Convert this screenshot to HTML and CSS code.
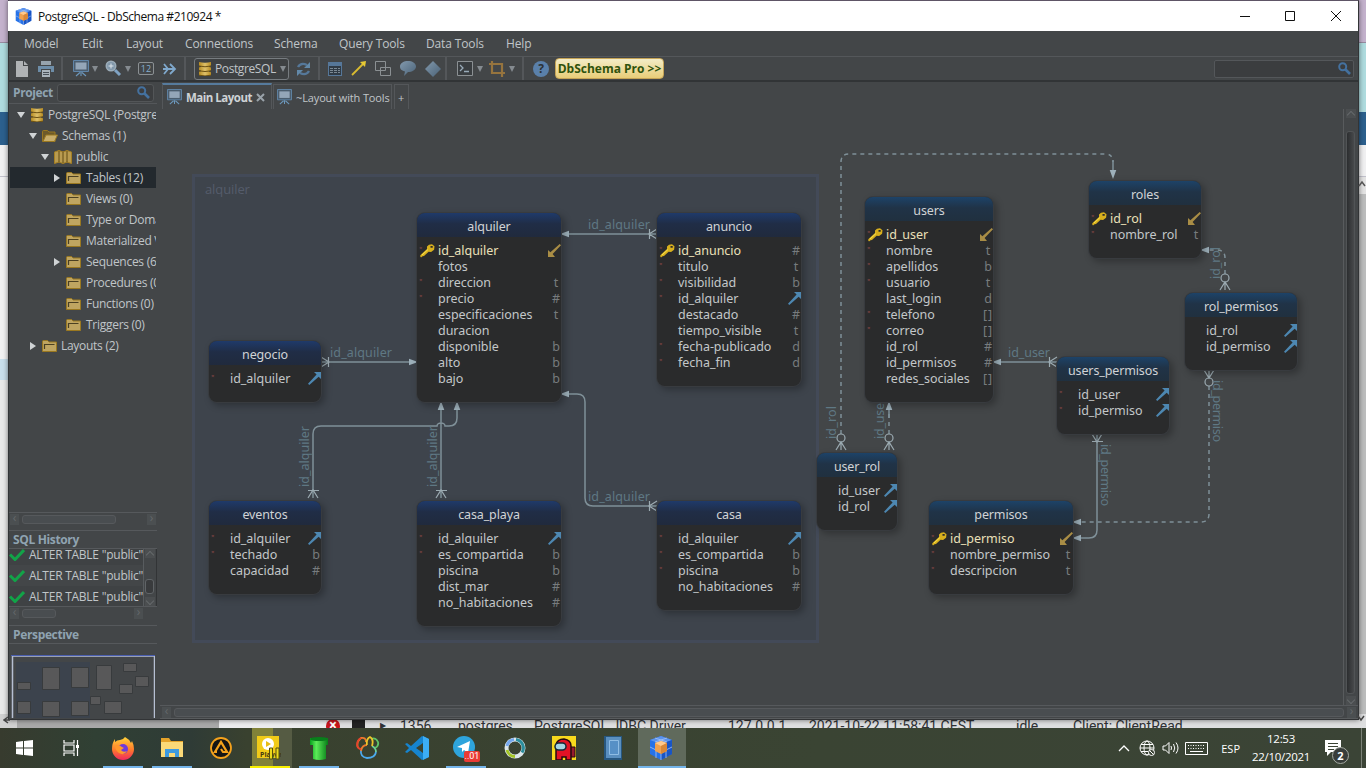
FILE: index.html
```html
<!DOCTYPE html>
<html lang="es">
<head>
<meta charset="utf-8">
<title>PostgreSQL - DbSchema</title>
<link rel="stylesheet" href="styles.css">
</head>
<body>
<svg class="defs" width="0" height="0">
  <defs>
    <linearGradient id="gold" x2="1"><stop offset="0" stop-color="#b78c22"/><stop offset=".5" stop-color="#dec06a"/><stop offset="1" stop-color="#b78c22"/></linearGradient>
    <linearGradient id="steel" x2="1" y2="1"><stop offset="0" stop-color="#8299ad"/><stop offset="1" stop-color="#4a6277"/></linearGradient>
    <linearGradient id="fire" x2="0" y2="1"><stop offset="0" stop-color="#ffd43a"/><stop offset=".55" stop-color="#ff7b2c"/><stop offset="1" stop-color="#f0285f"/></linearGradient>
    <linearGradient id="pipe" x2="1"><stop offset="0" stop-color="#05a01c"/><stop offset=".35" stop-color="#5cec58"/><stop offset="1" stop-color="#077d18"/></linearGradient>
    <symbol id="cube" viewBox="0 0 24 24"><path fill="#2672e8" d="M12 0l11 4v14l-11 6L1 18V4z"/><path fill="#5b93ee" d="M12 0l11 4-11 4L1 4z"/><path fill="#1955c5" d="M12 8l11-4v14l-11 6z"/><path stroke="#a9c4f0" stroke-width=".8" fill="none" d="M6 2l12 4M18 2L6 6M1 11l6 3v8M23 11l-6 3v8M12 18v6"/><path fill="#f0a14e" d="M12 5l6 2v8l-6 3-6-3V7z"/><path fill="#ffc98c" d="M12 5l6 2-6 3-6-3z"/><path fill="#d98737" d="M12 10l6-3v8l-6 3z"/></symbol>
    <symbol id="db" viewBox="0 0 14 14"><path fill="url(#gold)" d="M1 0q6 1.500 12 0v3.500q-1 1-2 .8v.8q2 0 2 .6v2.500q-1 1-2 .8v.8q2 0 2 .6V13q-6 2-12 0V9.800q0-.5 2-.6v-.8Q1 8.500 1 8V5.500q0-.5 2-.6v-.8Q1 4 1 3.500z"/><path stroke="#6d5214" fill="none" d="M1 4q6 1.500 12 0M1 8.800q6 1.500 12 0M1 13.200q6 1.500 12 0"/></symbol>
    <symbol id="folder" viewBox="0 0 15 12"><path fill="#bfa561" stroke="#9a7820" d="M.5 11.500V1.500q0-1 1-1h4l1.500 1.500h7.500v9.500z"/><path fill="none" stroke="#4b4022" stroke-width="1.200" d="M2.500 9V4.500h10"/></symbol>
    <symbol id="folder-open" viewBox="0 0 16 12"><path fill="#6d5a2a" stroke="#9a7820" d="M.5 11.500V1.500q0-1 1-1h4l1.500 1.500h6v9.500z"/><path fill="#c8ae6c" stroke="#9a7820" d="M1 11.500l3-6.500h11.500l-3 6.500z"/></symbol>
    <symbol id="map" viewBox="0 0 18 14"><path fill="#b99b50" stroke="#a57f22" d="M.5 2L5 .5 9 2l4-1.500L17.500 2v11.500L13 12l-4 1.500L5 12 .5 13.500z"/><path stroke="#614a13" d="M5 1v11M9 2v11M13 1v11"/></symbol>
    <symbol id="board" viewBox="0 0 16 17"><path fill="#4b5d6e" stroke="#6085a8" d="M.5.500h15v11H.5z"/><path fill="#94a6b8" d="M2.500 2.500h11v7h-11z"/><path stroke="#6c98bd" stroke-width="1.100" fill="none" d="M8 12v4M7 12.500l-4 3.500M9 12.500l4 3.500"/></symbol>
    <symbol id="lens" viewBox="0 0 13 13"><circle cx="4.700" cy="4.700" r="3.500" fill="none" stroke="#44719f" stroke-width="2"/><path stroke="#44719f" stroke-width="2.600" d="M7.500 7.500L12 12"/></symbol>
    <symbol id="key" viewBox="0 0 15 14"><path fill="#d8b01d" fill-rule="evenodd" d="M9 .8l3-.5 2.500 2-.4 3.500-3 2.200-2.500-.2L4 12l-1.500.3L1 13.500 0 12l1-1.500L7 5V2.500zM10.500 2v1.800h2.200V2z"/><path stroke="#f8e352" d="M2 11l6-5.500"/></symbol>
    <symbol id="fk" viewBox="0 0 13 13"><path fill="#4d87b1" d="M6 0h7v7l-2.300-2.300L1.300 13 0 11.700 8.600 2.600z"/></symbol>
    <symbol id="pk" viewBox="0 0 13 13"><path fill="#a98d45" d="M11.700 0L13 1.300 4.600 10 7 13H0V6l2.400 2.200z"/></symbol>
    <symbol id="check" viewBox="0 0 16 12"><path d="M1 5.500L6 10.500 15 1" fill="none" stroke="#12a348" stroke-width="3"/></symbol>
  </defs>
</svg>

<div class="backdrop"><i class="lilac"></i><i class="aqua"></i><i class="blue"></i><i class="paper"></i><i class="sel"></i><i class="paper2"></i><i class="paper3"></i></div>
<div class="backdrop right"><i class="lilac"></i><i class="aqua"></i><i class="blue"></i><i class="paper"></i><i class="thumb"></i><i class="paper3"></i></div>
<div class="behind"><i class="bscroll"></i><span class="err"><b>×</b></span><span class="blk"></span><span class="tri">▶</span><span class="c1">1356</span><span class="c2">postgres</span><span class="c3">PostgreSQL JDBC Driver</span><span class="c4">127.0.0.1</span><span class="c5">2021-10-22 11:58:41 CEST</span><span class="c6">idle</span><span class="c7">Client: ClientRead</span></div>

<div class="window">
  <header class="title"><svg width="17" height="17"><use href="#cube"/></svg><span>PostgreSQL - DbSchema #210924 *</span>
    <svg class="winctl" width="104" height="12" fill="none" stroke="#111"><path d="M1 6.500h10M46.500 1.500h9v9h-9zM92 1l10 10M102 1L92 11"/></svg>
  </header>
  <nav class="menu"><span>Model</span><span>Edit</span><span>Layout</span><span>Connections</span><span>Schema</span><span>Query Tools</span><span>Data Tools</span><span>Help</span></nav>
  <div class="toolbar">
    <div class="grp g1">
      <svg width="12" height="16"><path fill="#b0b3b5" d="M0 0h7v5h5v11H0zM8 0l4 4H8z"/></svg>
      <svg width="16" height="16"><path fill="#96a3ad" d="M3 0h10v4H3z"/><path fill="#6d8dA8" d="M0 5h16v6h-3V8H3v3H0z"/><path fill="#a9b3bb" d="M4 9h8v7H4z"/><path stroke="#485058" d="M5 11.500h6M5 13.500h6"/></svg>
    </div>
    <div class="grp g2">
      <svg width="16" height="17"><use href="#board"/></svg><i class="dd"></i>
      <svg width="17" height="17" class="mag"><circle cx="6" cy="6" r="4.700" fill="#8197aa" stroke="#9cadb9" stroke-width="1.600"/><path stroke="#dce4ea" d="M3.500 6h5M6 3.500v5"/><path stroke="#7fa3c4" stroke-width="3" d="M10 10l5 5"/></svg><i class="dd"></i>
      <span class="twelve">12</span>
      <svg class="chev" width="14" height="12" fill="none" stroke="#7fa8cc" stroke-width="1.800"><path d="M1 1l4 5-4 5M7 1l5 5-5 5M0 6h12"/></svg>
    </div>
    <div class="grp g3">
      <span class="combo"><svg width="14" height="14"><use href="#db"/></svg><span>PostgreSQL</span><i class="dd"></i></span>
      <svg width="15" height="14" fill="none" stroke="#55789a" stroke-width="2.400"><path d="M2 5Q5 0 11 3M13 9q-3 5-9 2"/><path fill="#6289a9" stroke="none" d="M14 0v6H8zM1 14V8h6z"/></svg>
    </div>
    <div class="grp g4">
      <svg width="14" height="14"><path fill="#567799" d="M0 0h14v14H0z"/><path fill="#303b46" d="M1 4h12v9H1z"/><path stroke="#7b8994" stroke-dasharray="3 1" d="M2 6.500h10M2 8.500h10M2 10.500h10"/></svg>
      <svg width="15" height="15"><path stroke="#d9bb30" stroke-width="1.800" d="M1 14L12 3"/><path fill="#e6c934" d="M9 1l6-1-1 6z"/></svg>
      <svg width="16" height="16"><path fill="none" stroke="#8b9093" d="M.5.500h10v9H.5zM5.500 6.500h10v8h-10z"/></svg>
      <svg width="16" height="15"><path fill="url(#steel)" d="M8 0c4 0 8 2 8 5.500S12 11 8 11l-4 4 1-4.500C1 9.500 0 7.500 0 5.500 0 2 4 0 8 0z"/></svg>
      <svg width="16" height="16"><path fill="url(#steel)" d="M8 0l8 8-8 8-8-8z"/></svg>
    </div>
    <div class="grp g5">
      <svg width="16" height="15"><path fill="#393d40" stroke="#8b9093" d="M.5.500h15v14H.5z"/><path fill="none" stroke="#98aab8" stroke-width="1.300" d="M3 4l3 3-3 3M7 10.500h5"/></svg><i class="dd"></i>
      <svg width="16" height="16"><path fill="none" stroke="#96743e" stroke-width="2.200" d="M0 3h13v13M3 0v12h13"/></svg><i class="dd"></i>
    </div>
    <div class="grp g6"><span class="help">?</span><span class="pro">DbSchema Pro &gt;&gt;</span></div>
    <div class="search"><svg width="13" height="13"><use href="#lens"/></svg></div>
  </div>
  <main class="main">
    <aside class="side">
      <div class="phead"><b>Project</b><span class="psearch"><svg width="13" height="13"><use href="#lens"/></svg></span></div>
      <ul class="tree">
        <li class="l0"><i class="open"></i><svg width="14" height="14"><use href="#db"/></svg>PostgreSQL {PostgreSQL}</li>
        <li class="l1"><i class="open"></i><svg width="16" height="12"><use href="#folder-open"/></svg>Schemas (1)</li>
        <li class="l2"><i class="open"></i><svg width="18" height="14"><use href="#map"/></svg>public</li>
        <li class="l3 on"><i class="shut"></i><svg width="15" height="12"><use href="#folder"/></svg>Tables (12)</li>
        <li class="l3"><i></i><svg width="15" height="12"><use href="#folder"/></svg>Views (0)</li>
        <li class="l3"><i></i><svg width="15" height="12"><use href="#folder"/></svg>Type or Domains</li>
        <li class="l3"><i></i><svg width="15" height="12"><use href="#folder"/></svg>Materialized Views</li>
        <li class="l3"><i class="shut"></i><svg width="15" height="12"><use href="#folder"/></svg>Sequences (6)</li>
        <li class="l3"><i></i><svg width="15" height="12"><use href="#folder"/></svg>Procedures (0)</li>
        <li class="l3"><i></i><svg width="15" height="12"><use href="#folder"/></svg>Functions (0)</li>
        <li class="l3"><i></i><svg width="15" height="12"><use href="#folder"/></svg>Triggers (0)</li>
        <li class="l1"><i class="shut"></i><svg width="15" height="12"><use href="#folder"/></svg>Layouts (2)</li>
      </ul>
      <div class="hbar"><i>‹</i><span class="grip g94"></span><i>›</i></div>
      <h3 class="sect">SQL History</h3>
      <div class="history">
        <div class="hlist"><p><svg width="16" height="12"><use href="#check"/></svg>ALTER TABLE "public"</p><p><svg width="16" height="12"><use href="#check"/></svg>ALTER TABLE "public"</p><p><svg width="16" height="12"><use href="#check"/></svg>ALTER TABLE "public"</p></div>
        <div class="vbar"><i class="au"></i><span></span><i class="ad"></i></div>
      </div>
      <div class="hbar short"><i>‹</i><span class="grip g34"></span><i>›</i></div>
      <h3 class="sect persp">Perspective</h3>
      <svg class="mini" width="144" height="63" viewBox="11 656 144 63"><path fill="#3c434d" d="M16 663h74v56H16z"/><g fill="#585859" stroke="#383b3d"><path d="M17.500 683.500h13v7h-13zM42.500 668.500h17v22h-17zM71.500 668.500h17v20h-17zM96.500 666.500h15v24h-15zM123.500 664.500h13v8h-13zM135.500 677.500h13v10h-13zM119.500 685.500h13v9h-13zM90.500 697.500h10v8h-10zM104.500 702.500h17v12h-17zM17.500 702.500h13v12h-13zM42.500 702.500h17v15h-17zM71.500 702.500h17v14h-17z"/></g><path fill="none" stroke="#b6bfd2" stroke-width="1.500" d="M12.500 719v-62h142v62"/><path stroke="#4a5eb0" d="M11 656.500h144"/></svg>
    </aside>
    <section class="work">
      <div class="tabs"><span class="tab act"><svg width="15" height="16"><use href="#board"/></svg><b>Main Layout</b><svg width="9" height="9"><path stroke="#9aa3aa" stroke-width="2" d="M1 1l7 7M8 1L1 8"/></svg></span><span class="tab"><svg width="15" height="16"><use href="#board"/></svg>~Layout with Tools</span><span class="tab plus">+</span></div>
      <div class="body">
        <div class="canvas">
          <div class="group">alquiler</div>
          <svg class="wires" width="1182" height="596" viewBox="160 109 1182 596">
            <g fill="none" stroke="#7f9098" stroke-width="1.500">
              <path d="M321 362h94M563 234h94M313 498V434q0-8 8-8H437a4 3 0 0 1 8 0H449q8 0 8-8V406M441 498V406M657 506H593q-8 0-8-8V402q0-8-8-8H563M1057 362H995M1097 434V530q0 8-8 8H1075"/>
              <path stroke-dasharray="4 4" d="M841 434V162q0-8 8-8H1105q8 0 8 8M889 434V410M1225 274V258q0-8-8-8H1209M1209 386V514q0 8-8 8H1081"/>
              <path d="M1113 160v12M889 418v-10"/>
            </g>
            <g fill="none" stroke="#9cabb2" stroke-width="1.200">
              <path d="M321 357l8 5-8 5M328.500 357v10M657 229l-8 5 8 5M649.500 229v10M308 498l5-8 5 8M308 490.500h11M436 498l5-8 5 8M436 490.500h11M657 501l-8 5 8 5M649.500 501v10M1057 357l-8 5 8 5M1049.500 357v10M1092 434l5 8 5-8M1092 441.500h11"/>
              <path d="M836 450l5-8 5 8M841 442v8M884 450l5-8 5 8M889 442v8M1220 290l5-8 5 8M1225 282v8M1204 370l5 8 5-8M1209 370v8"/>
              <circle cx="841" cy="438" r="4"/><circle cx="889" cy="438" r="4"/><circle cx="1225" cy="278" r="4"/><circle cx="1209" cy="382" r="4"/>
            </g>
            <g fill="#9db0ba"><path d="M418 362l-9-3.300v6.600zM560 234l9-3.300v6.600zM457 401l-3.300 9h6.600zM441 401l-3.300 9h6.600zM560 394l9-3.300v6.600zM992 362l9-3.300v6.600zM1072 538l9-3.300v6.600zM1072 522l9-3.300v6.600zM1113 179l-3.300-9h6.600zM889 401l-3.300 9h6.600zM1200 250l9-3.300v6.600z"/></g>
            <g class="lbl">
              <text x="330" y="357" textLength="62">id_alquiler</text><text x="588" y="229" textLength="62">id_alquiler</text><text x="588" y="501" textLength="62">id_alquiler</text><text x="1008" y="357" textLength="42">id_user</text>
              <text transform="translate(309 487) rotate(-90)" textLength="61">id_alquiler</text><text transform="translate(437 487) rotate(-90)" textLength="61">id_alquiler</text>
              <text transform="translate(836 439) rotate(-90)" textLength="33">id_rol</text><text transform="translate(884 439) rotate(-90)" textLength="36">id_use</text><text transform="translate(1220 279) rotate(-90)" textLength="32">id_rol</text>
              <text transform="translate(1212.500 380) rotate(90)" textLength="62">id_permiso</text><text transform="translate(1100.500 444) rotate(90)" textLength="62">id_permiso</text>
            </g>
          </svg>

          <div class="tbl alquiler"><h4>alquiler</h4>
            <p class="nn key"><svg><use href="#key"/></svg>id_alquiler<svg class="r"><use href="#pk"/></svg></p><p>fotos</p><p class="nn">direccion<i>t</i></p><p class="nn">precio<i>#</i></p><p>especificaciones<i>t</i></p><p>duracion</p><p>disponible<i>b</i></p><p>alto<i>b</i></p><p>bajo<i>b</i></p></div>
          <div class="tbl anuncio"><h4>anuncio</h4>
            <p class="nn key"><svg><use href="#key"/></svg>id_anuncio<i>#</i></p><p class="nn">titulo<i>t</i></p><p class="nn">visibilidad<i>b</i></p><p class="nn">id_alquiler<svg class="r"><use href="#fk"/></svg></p><p>destacado<i>#</i></p><p>tiempo_visible<i>t</i></p><p class="nn">fecha-publicado<i>d</i></p><p class="nn">fecha_fin<i>d</i></p></div>
          <div class="tbl negocio"><h4>negocio</h4><p class="nn">id_alquiler<svg class="r"><use href="#fk"/></svg></p></div>
          <div class="tbl eventos"><h4>eventos</h4><p class="nn">id_alquiler<svg class="r"><use href="#fk"/></svg></p><p class="nn">techado<i>b</i></p><p>capacidad<i>#</i></p></div>
          <div class="tbl playa"><h4>casa_playa</h4><p class="nn">id_alquiler<svg class="r"><use href="#fk"/></svg></p><p class="nn">es_compartida<i>b</i></p><p>piscina<i>b</i></p><p>dist_mar<i>#</i></p><p>no_habitaciones<i>#</i></p></div>
          <div class="tbl casa"><h4>casa</h4><p class="nn">id_alquiler<svg class="r"><use href="#fk"/></svg></p><p class="nn">es_compartida<i>b</i></p><p class="nn">piscina<i>b</i></p><p>no_habitaciones<i>#</i></p></div>
          <div class="tbl teal users"><h4>users</h4>
            <p class="nn key"><svg><use href="#key"/></svg>id_user<svg class="r"><use href="#pk"/></svg></p><p class="nn">nombre<i>t</i></p><p class="nn">apellidos<i>b</i></p><p class="nn">usuario<i>t</i></p><p>last_login<i>d</i></p><p class="nn">telefono<i class="arr">[]</i></p><p class="nn">correo<i class="arr">[]</i></p><p>id_rol<i>#</i></p><p>id_permisos<i>#</i></p><p>redes_sociales<i class="arr">[]</i></p></div>
          <div class="tbl teal roles"><h4>roles</h4><p class="nn key"><svg><use href="#key"/></svg>id_rol<svg class="r"><use href="#pk"/></svg></p><p class="nn">nombre_rol<i>t</i></p></div>
          <div class="tbl teal rolperm"><h4>rol_permisos</h4><p>id_rol<svg class="r"><use href="#fk"/></svg></p><p>id_permiso<svg class="r"><use href="#fk"/></svg></p></div>
          <div class="tbl teal userperm"><h4>users_permisos</h4><p class="nn">id_user<svg class="r"><use href="#fk"/></svg></p><p class="nn">id_permiso<svg class="r"><use href="#fk"/></svg></p></div>
          <div class="tbl teal userrol"><h4>user_rol</h4><p>id_user<svg class="r"><use href="#fk"/></svg></p><p>id_rol<svg class="r"><use href="#fk"/></svg></p></div>
          <div class="tbl teal permisos"><h4>permisos</h4><p class="nn key"><svg><use href="#key"/></svg>id_permiso<svg class="r"><use href="#pk"/></svg></p><p class="nn">nombre_permiso<i>t</i></p><p class="nn">descripcion<i>t</i></p></div>
        </div>
        <div class="vbar big"><i class="au"></i><span></span><i class="ad"></i></div>
      </div>
      <div class="hbar wide"><i>‹</i><span class="grip"></span><i>›</i></div>
    </section>
  </main>
</div>
<svg class="corner sw" width="8" height="8"><path d="M5 1L1 4l4 3M1 4h6" fill="none" stroke="#444" stroke-width="1.500"/></svg>
<svg class="corner se" width="8" height="8"><path d="M1 1l3 4 3-4" fill="none" stroke="#444" stroke-width="1.500"/></svg>
<svg class="corner ne" width="8" height="8"><path d="M1 6l3-4 3 4" fill="none" stroke="#555" stroke-width="1.500"/></svg>

<footer class="taskbar">
  <div class="app"><svg width="17" height="16" fill="#fff"><path d="M0 2l7-1v6.500H0zM8 1l9-1v7.500H8zM0 8.500h7V15l-7-1zM8 8.500h9V16l-9-1z"/></svg></div>
  <div class="app"><svg width="17" height="16" fill="none" stroke="#fff" stroke-width="1.200"><path d="M1 0v3h10V0M1 5h10v6H1zM1 16v-3h10v3M14.500 0v16"/><path fill="#fff" stroke="none" d="M13 5h3v3h-3z"/></svg></div>
  <div class="app run"><svg width="24" height="24" viewBox="0 0 24 24"><path fill="url(#fire)" d="M14 1q4 2 6 6l1-2q2 4 2 8a11 11 0 0 1-22 0q0-6 3-10v3q2-2 5-2 3 0 5-3z"/><circle cx="12" cy="13" r="5" fill="#703adb"/><path fill="#ff982c" d="M4 10q4-2 7 1l2 1-3 2q2 3 6 1-3 5-8 2-4-3-4-7z"/></svg></div>
  <div class="app run"><svg width="22" height="20"><path fill="#e5a32a" d="M0 0h8l2 3h12v6H0z"/><path fill="#fbd978" d="M0 4h22v15H0z"/><path fill="#3f9be0" d="M4 11h14v8h-4v-4H8v4H4z"/></svg></div>
  <div class="app"><svg width="22" height="22"><circle cx="11" cy="11" r="10" fill="#151515" stroke="#f5a21c" stroke-width="1.800"/><path fill="none" stroke="#f5a21c" stroke-width="2.200" d="M7 15h-2l6-10 6 10h-4l-2-3"/></svg></div>
  <div class="app run player"><svg width="24" height="25"><path fill="#f1cb18" d="M0 0h22v22H0z"/><circle cx="11" cy="8" r="6" fill="#fff"/><path fill="#e8bc14" d="M9 5l5 3-5 3z"/><text x="3" y="21" font-size="7" font-family="Open Sans" font-weight="700" fill="#443a10">Player</text><path fill="#ecd91c" stroke="#55500e" d="M12.500 12h3v11h-3zM19 12h3v11h-3z"/></svg></div>
  <div class="app run"><svg width="18" height="23"><path fill="url(#pipe)" d="M0 1h18v7h-2v14q-7 2-13 0V8H0z"/><ellipse cx="9" cy="2" rx="9" ry="2" fill="#087f1b"/></svg></div>
  <div class="app"><svg width="24" height="24" fill="none" stroke-width="1.800"><path stroke="#4caaed" d="M5 14q-1 7 6 8 8 0 9-6"/><path stroke="#6fd0a0" d="M20 16q0-4-4-6"/><path stroke="#ec7a2d" d="M5 15q1-6 6-6M2 12Q0 6 5 2q5-1 5 4"/><path stroke="#e5432c" d="M5 2q-4 2-4 7 1 4 4 4"/><path stroke="#61c568" d="M19 12q4-2 3-6-2-5-7-3"/><path stroke="#ecc62b" d="M11 9Q10 3 14 1q4 2 2 9"/></svg></div>
  <div class="app"><svg width="24" height="24"><path fill="#1684cf" d="M17 0l7 3v18l-7 3L6 14l-4 3-2-1 4-4-4-4 2-1 4 3zM18 7l-7 5 7 5z"/><path fill="#3cadf5" d="M18 0l6 3v18l-6 3z"/></svg></div>
  <div class="app run tele"><svg width="25" height="24"><circle cx="11" cy="11" r="11" fill="#2ea4dc"/><path fill="#fff" d="M4 11l13-6-2 12-4-3-2 2v-4z"/></svg><b>..01</b></div>
  <div class="app"><svg width="22" height="22" fill="none" stroke-width="3"><circle cx="11" cy="11" r="8.500" stroke="#dce6ea" stroke-width="4"/><path stroke="#75a8ee" d="M3 9a8.500 8.500 0 0 1 7-6.500"/><path stroke="#2c8d9c" d="M12 2.500a8.500 8.500 0 0 1 6 13"/><path stroke="#a4c526" d="M3 13a8.500 8.500 0 0 0 8 6.500"/></svg></div>
  <div class="app"><svg width="24" height="24"><path fill="#f8d91d" d="M0 0h24v24H0z"/><path fill="#971b2e" stroke="#240a10" d="M18 11h5v10h-5z"/><path fill="#e31225" stroke="#240a10" stroke-width="1.500" d="M4 24V9q1-6 8-6 7 1 7 7v14h-5v-3h-4v3z"/><rect x="3" y="7" width="11" height="7" rx="3.500" fill="#a6d6e4" stroke="#142a38" stroke-width="1.500"/></svg></div>
  <div class="app"><svg width="18" height="24"><path fill="#27577f" d="M0 0h18v24H0z"/><path fill="#5a8fbf" d="M2 1h15v21H2z"/><path fill="#5690c6" stroke="#8fbde4" d="M5.500 4.500h9v14h-9z"/></svg></div>
  <div class="app run active"><svg width="24" height="24"><use href="#cube"/></svg></div>
  <div class="tray">
    <svg class="up" width="12" height="7" fill="none" stroke="#fff" stroke-width="1.300"><path d="M1 6l5-5 5 5"/></svg>
    <svg width="17" height="17" fill="none" stroke="#fff"><circle cx="8" cy="8" r="7"/><ellipse cx="8" cy="8" rx="3" ry="7"/><path d="M1 8h14M2 4.500h12M2 11.500h7"/><circle cx="12.500" cy="12.500" r="3" fill="#3b4435"/><path d="M10.500 10.500l4 4"/></svg>
    <svg width="17" height="14" fill="none" stroke="#fff"><path d="M1 5h2.500L7 1.500v11L3.500 9H1zM9 5q1 2 0 4M11.500 3q2.500 4 0 8M14 1.500q4 5.500 0 11"/></svg>
    <svg width="23" height="13" fill="none" stroke="#fff"><path d="M.5.500h22v12H.5z"/><path stroke-dasharray="1 1.500" d="M3 3.500h17M3 6.500h17"/><path d="M5 9.500h13"/></svg>
    <span class="esp">ESP</span><span class="clock">12:53<br>22/10/2021</span>
    <span class="note"><svg width="16" height="16"><path fill="#fff" d="M0 0h16v12H6l-4 4v-4H0z"/><path stroke="#3b4435" d="M3 3.500h10M3 6.500h10M3 9.500h6"/></svg><b>2</b></span><i class="peek"></i>
  </div>
</footer>
</body>
</html>
```
FILE: styles.css
```css
* { box-sizing: border-box; }
body { margin: 0; width: 1366px; height: 768px; overflow: hidden; position: relative; background: #e4e5e6; font: 12px "Open Sans", "Noto Sans", sans-serif; color: #c0c5c8; }
p, h3, h4, ul { margin: 0; padding: 0; font-weight: 400; }
i { font-style: normal; }
svg { display: block; flex: none; }
.defs { position: absolute; }

/* Desktop behind the window */
.backdrop { position: absolute; left: 0; top: 0; width: 9px; height: 728px; display: flex; flex-direction: column; }
.backdrop.right { left: 1357px; }
.backdrop i { display: block; flex: none; }
.lilac { height: 43px; background: #c4b2cd; border-bottom: 1px solid #988ba0; }
.aqua { height: 69px; background: #afdcdf; }
.blue { height: 33px; background: #2c608e; }
.paper { height: 32px; background: #f1f1f2; border-bottom: 1px solid #c2c2cc; }
.sel { order: 2; height: 21px; background: #c9dfec; }
.paper2 { height: 182px; background: #f1f1f2; }
.paper3 { order: 3; height: 348px; background: #e9e9e9; }
.right .thumb { height: 17px; background: #e4e4e4; }
.right .paper3 { height: 534px; background: #bcbdbd; }
.behind { position: absolute; left: 0; top: 714px; width: 1366px; height: 14px; overflow: hidden; display: flex; background: #dedfe0; color: #303236; font: 14px/24px Roboto, sans-serif; }
.behind span { flex: none; white-space: nowrap; }
.bscroll { flex: none; width: 326px; height: 14px; border-left: 17px solid #d1d1d1; border-right: 107px solid #ececee; background: #a9a9a9; }
.err b { display: block; width: 14px; height: 14px; margin-top: 5px; border-radius: 7px; background: #c8151d; color: #fff; font-size: 14px; line-height: 13px; text-align: center; }
.err { width: 26px; }
.blk { width: 13px; height: 14px; background: #222; margin-right: 15px; }
.tri { width: 20px; font-size: 8px; }
.c1 { width: 58px; } .c2 { width: 76px; } .c3 { width: 194px; } .c4 { width: 81px; } .c5 { width: 207px; } .c6 { width: 57px; } .c7 { width: 200px; }
.corner { position: absolute; }
.sw { left: 3px; top: 716px; } .se { left: 1357px; top: 715px; } .ne { left: 1358px; top: 180px; }

/* Window chrome */
.window { position: absolute; left: 8px; top: 0; width: 1351px; height: 720px; display: flex; flex-direction: column; background: #434648; border: 1px solid #323436; border-top-color: #5e5566; box-shadow: 0 0 5px #0008; }
.title { flex: none; height: 30px; display: flex; align-items: center; background: #fff; color: #111; padding: 0 15px 0 7px; margin-left: -1px; font-size: 12px; letter-spacing: -.48px; }
.title span { margin-left: 6px; letter-spacing: -.45px; }
.title svg:first-child { margin-left: 0; }
.winctl { margin-left: auto; }
.menu { flex: none; height: 25px; display: flex; align-items: center; padding-left: 15px; }
.menu span { white-space: nowrap; letter-spacing: -.13px; }
.menu span:nth-child(1) { width: 58px; } .menu span:nth-child(2) { width: 44px; } .menu span:nth-child(3) { width: 59px; } .menu span:nth-child(4) { width: 89px; } .menu span:nth-child(5) { width: 65px; } .menu span:nth-child(6) { width: 87px; } .menu span:nth-child(7) { width: 80px; }
.toolbar { flex: none; height: 26px; display: flex; border-top: 1px solid #54575a; border-bottom: 2px solid #313436; }
.grp { display: flex; align-items: center; flex: none; border-right: 2px solid #54575a; }
.g1 { width: 54px; padding-left: 7px; gap: 10px; }
.g2 { width: 123px; padding-left: 10px; }
.g3 { width: 134px; padding-left: 8px; gap: 7px; }
.g4 { width: 127px; padding-left: 8px; gap: 9px; }
.g5 { width: 77px; padding-left: 10px; }
.g6 { border: 0; padding-left: 9px; gap: 6px; }
.dd { flex: none; border: 3px solid transparent; border-top: 6px solid #858b90; border-bottom: 0; margin-left: 4px; }
.g2 .dd { margin-left: 3px; margin-right: 1px; }
.mag { margin-left: 6px; }
.twelve { border: 1px solid #8b9093; width: 16px; height: 13px; margin-left: 6px; font-size: 9px; line-height: 11px; text-align: center; color: #86aed0; border-radius: 2px; }
.chev { margin-left: 9px; }
.g5 svg + i + svg { margin-left: 6px; }
.combo { width: 95px; height: 22px; display: flex; align-items: center; border: 1px solid #777c80; border-radius: 3px; padding-left: 3px; background: #3e4143; }
.combo span { margin-left: 3px; letter-spacing: -.4px; }
.help { width: 16px; height: 16px; border-radius: 8px; background: #5a80aa; color: #2c3136; font-weight: 700; line-height: 16px; text-align: center; }
.pro { width: 109px; height: 21px; border-radius: 4px; background: linear-gradient(#f3ecc7, #e9cd78); border: 1px solid #c6a456; color: #2f520c; font-weight: 700; line-height: 19px; text-align: center; white-space: nowrap; }
.search { width: 140px; height: 18px; margin: 3px 4px 0 auto; border: 1px solid #54575a; background: #3b3d3f; border-radius: 2px; padding: 1px 2px; display: flex; justify-content: flex-end; }
.main { flex: 1; display: flex; min-height: 0; }

/* Project panel */
.side { width: 148px; flex: none; display: flex; flex-direction: column; }
.phead { height: 22px; flex: none; display: flex; align-items: center; gap: 4px; padding-left: 4px; border-bottom: 1px solid #54575a; color: #8fa3b1; }
.phead b { letter-spacing: -.4px; }
.psearch { flex: 1; height: 18px; border: 1px solid #535658; border-radius: 3px; background: #3c3e40; display: flex; justify-content: flex-end; padding: 1px 3px; margin-right: 3px; }
.tree { list-style: none; height: 408px; flex: none; overflow: hidden; padding: 0 1px; }
.tree li { height: 21px; display: flex; align-items: center; white-space: nowrap; overflow: hidden; letter-spacing: -.28px; }
.tree svg { margin-right: 5px; }
.tree i { width: 12px; flex: none; }
.tree i.open::before { content: ""; display: block; border: 4px solid transparent; border-top: 6px solid #d0d3d5; border-bottom: 0; width: 0; }
.tree i.shut::before { content: ""; display: block; border: 4px solid transparent; border-left: 6px solid #d0d3d5; border-right: 0; width: 0; margin-left: 1px; }
.l0 { padding-left: 7px; } .l0 svg { margin-right: 4px; }
.tree li svg { margin-left: 1px; }
.tree .l0 svg, .tree .l1 svg { margin-right: 4px; }
.l1 { padding-left: 19px; }
.l2 { padding-left: 31px; }
.tree .l2 svg { margin-right: 4px; }
.l3 { padding-left: 43px; }
.tree .on { background: #23292e; }
.hbar { height: 13px; flex: none; display: flex; align-items: center; border-top: 1px solid #56595c; padding: 0 1px; color: #64686b; }
.hbar i { width: 9px; height: 11px; line-height: 8px; text-align: center; background: #4b4f51; }
.hbar i:last-child { margin-left: auto; }
.grip { height: 9px; border: 1px solid #56595c; border-radius: 3px; margin: 0 3px; background: #494d50; }
.g94 { width: 94px; } .g34 { width: 34px; }
.sect { flex: none; height: 19px; margin-top: 5px; border-top: 1px solid #56595c; border-bottom: 1px solid #56595c; padding-left: 4px; color: #8fa3b1; font: 700 12px/17px "Open Sans", sans-serif; letter-spacing: -.35px; }
.history { flex: none; height: 57px; display: flex; border-right: 1px solid #323436; }
.hlist { width: 135px; height: 58px; overflow: hidden; border-right: 1px solid #585c5f; display: flex; flex-direction: column; justify-content: flex-end; }
.hlist p { height: 21px; flex: none; display: flex; align-items: center; gap: 4px; white-space: nowrap; letter-spacing: -.25px; }
.hlist p:nth-child(odd) { background: #3f4244; }
.vbar { width: 11px; display: flex; flex-direction: column; align-items: center; }
.vbar i { width: 10px; height: 9px; flex: none; background: #4b4e50; display: flex; justify-content: center; align-items: center; }
.au::before, .ad::before { content: ""; width: 5px; height: 5px; border: 1px solid #65696b; border-width: 1px 0 0 1px; transform: translateY(1px) rotate(45deg); }
.ad::before { transform: translateY(-1px) rotate(225deg); }
.vbar span { width: 9px; height: 15px; margin-top: auto; margin-bottom: 3px; border: 1px solid #606467; border-radius: 3px; background: #393b3d; }
.hbar.short { padding-right: 14px; }
.persp { height: 19px; margin-top: 6px; }
.mini { margin: 11px 0 0 2px; }

/* Work area */
.work { flex: 1; display: flex; flex-direction: column; margin-left: 3px; min-width: 0; }
.tabs { height: 27px; flex: none; display: flex; align-items: stretch; padding: 1px 0 0 2px; }
.tab { display: flex; align-items: center; border: 1px solid #54575a; border-bottom: 0; padding: 0 4px; gap: 4px; font-size: 11px; white-space: nowrap; margin-top: 1px; letter-spacing: -.13px; }
.tab.act { width: 110px; margin-top: 0; border-top: 2px solid #567b9d; font-size: 11.500px; letter-spacing: -.5px; color: #ced2d5; }
.tab:nth-child(2) { width: 119px; margin-left: 1px; padding-left: 3px; }
.tab.plus { width: 15px; padding: 0 3px; margin-left: 2px; }
.body { flex: 1; display: flex; min-height: 0; }
.canvas { position: relative; width: 1183px; flex: none; overflow: hidden; }
.vbar.big { width: 14px; border-left: 1px solid #585b5d; }
.vbar.big span { flex: 1; margin: 13px 0 2px; background: linear-gradient(90deg, #2c2e30, #47494b); border-color: #515456; }
.hbar.wide { height: 14px; padding: 0 2px; border-bottom: 1px solid #585b5d; }
.wide .grip { flex: 1; }

/* Diagram */
.group { position: absolute; left: 32px; top: 65px; width: 627px; height: 469px; border: 3px solid #434a58; background: #3e444c; color: #555c6b; padding: 3px 10px; font-size: 13px; letter-spacing: -.1px; }
.wires { position: absolute; left: 0; top: 0; }
.lbl { fill: #5f7884; font: 12.500px "Noto Sans", sans-serif; }
.tbl { position: absolute; padding-bottom: 15px; border-radius: 8px; background: #2a2b2c; box-shadow: 0 0 0 1px #383b3f, 3px 3px 7px 1px #0004; font: 12.500px "Noto Sans", sans-serif; letter-spacing: -.04px; color: #c3c7c9; width: 144px; }
.tbl h4 { height: 24px; margin-bottom: 6px; border-radius: 8px 8px 0 0; background: linear-gradient(#1f3a6a, #202d46 45%, #202a3d); font-size: 12.500px; line-height: 28px; text-align: center; color: #d0d3d6; letter-spacing: -.13px; }
.teal h4 { background: linear-gradient(#1d4368, #203347 45%, #20303f); }
.tbl p { position: relative; height: 16px; padding-left: 21px; line-height: 16px; white-space: nowrap; display: flex; }
.tbl p svg { position: absolute; left: 3px; top: 1px; width: 15px; height: 14px; }
.tbl p svg.r { left: auto; right: 0; top: 1px; width: 13px; height: 13px; }
.tbl .key { color: #eae0b9; }
.tbl i { width: 10px; margin-left: auto; color: #777b7e; display: flex; justify-content: center; }
.tbl i.arr { letter-spacing: .8px; }
.nn::before { content: "×"; position: absolute; left: 2px; top: -3px; font-size: 6px; color: #8f4a4a; }
.alquiler { left: 257px; top: 104px; }
.anuncio { left: 497px; top: 104px; }
.negocio { left: 49px; top: 232px; width: 112px; }
.eventos { left: 49px; top: 392px; width: 112px; }
.playa { left: 257px; top: 392px; }
.casa { left: 497px; top: 392px; }
.users { left: 705px; top: 88px; width: 128px; }
.roles { left: 929px; top: 72px; width: 112px; }
.rolperm { left: 1025px; top: 184px; width: 112px; }
.userperm { left: 897px; top: 248px; width: 112px; }
.userrol { left: 657px; top: 344px; width: 80px; }
.permisos { left: 769px; top: 392px; }

/* Taskbar */
.taskbar { position: absolute; left: 0; top: 728px; width: 1366px; height: 40px; display: flex; background: linear-gradient(90deg, #373b2e, #304034 7%, #2f3b36 14%, #39412f 18%, #3a4433 60%, #3b4436); }
.app { width: 49px; flex: none; display: flex; align-items: center; justify-content: center; position: relative; }
.app:nth-child(1) { width: 48px; } .app:nth-child(2) { width: 50px; padding-right: 3px; }
.run::after { content: ""; position: absolute; left: 5px; right: 4px; bottom: 0; height: 2px; background: #74b4ea; }
.player { background: linear-gradient(90deg, transparent 7px, #818239 7px 28px, #555b43 28px 47px, transparent 47px); }
.player::after { background: #f8f000; }
.player, .active { padding-right: 1px; }
.active { background: linear-gradient(90deg, transparent 1px, #606a5c 1px 49px, transparent 49px); width: 49px; }
.active::after { left: 1px; right: 0; }
.tele b { position: absolute; left: 23px; top: 23px; width: 16px; height: 11px; background: #e93b35; border-radius: 2px; color: #fff; font: 9px/11px Roboto, sans-serif; text-align: center; }
.tray { margin-left: auto; display: flex; align-items: center; color: #fff; gap: 6px; }
.up { margin-right: 3px; }
.esp { margin: 0 5px 0 7px; font-size: 11px; }
.clock { width: 60px; text-align: center; font-size: 11.500px; line-height: 18px; letter-spacing: -.3px; }
.note { position: relative; width: 28px; margin: 0 2px 0 8px; }
.note b { position: absolute; left: 7px; top: 7px; width: 17px; height: 17px; border-radius: 9px; background: #383d3a; border: 1px solid #a5aaa2; font-size: 11px; line-height: 15px; text-align: center; }
.peek { width: 1px; height: 40px; background: #7b8177; margin-right: 4px; }
```
